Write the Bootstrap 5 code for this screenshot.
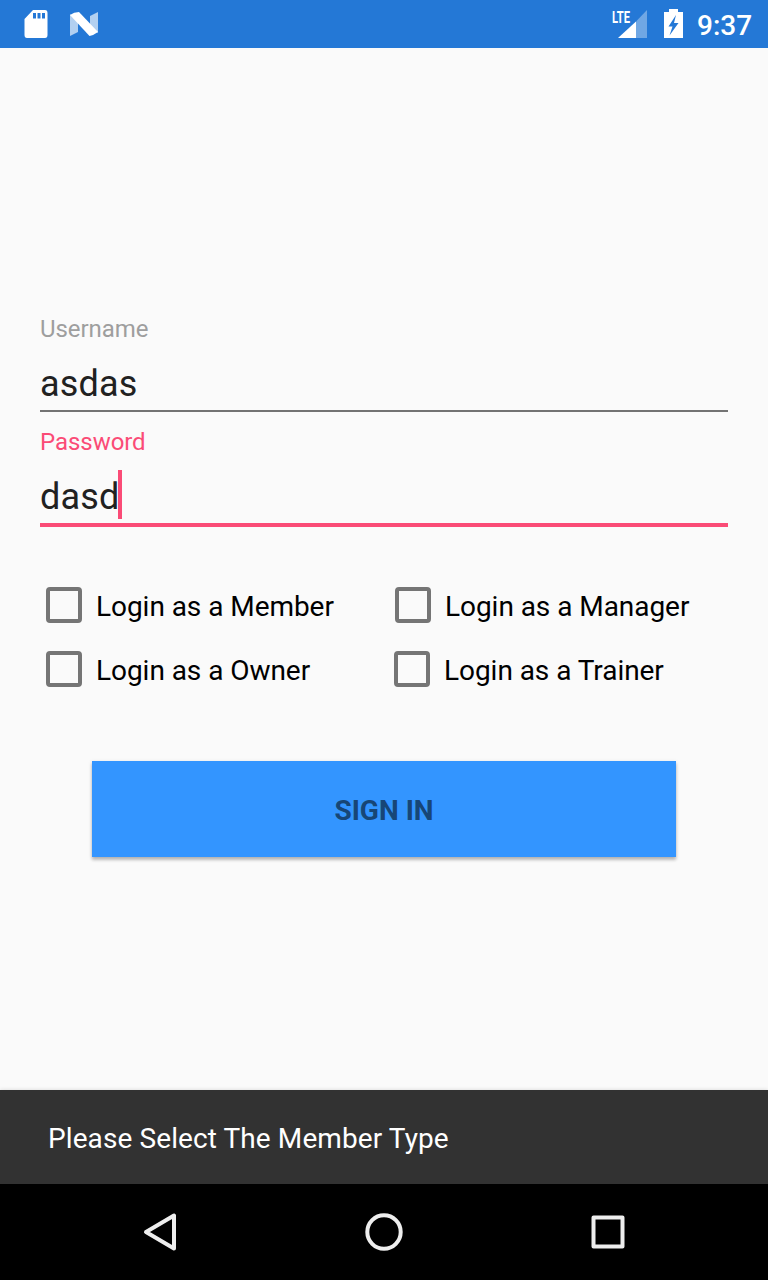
<!DOCTYPE html>
<html lang="en">
<head>
<meta charset="utf-8">
<meta name="viewport" content="width=device-width, initial-scale=1">
<title>Sign in</title>
<link href="https://cdn.jsdelivr.net/npm/bootstrap@5.3.0/dist/css/bootstrap.min.css" rel="stylesheet">
<style>
body{font-family:Roboto,sans-serif;background:#fafafa;height:1280px;overflow:hidden;color:#000}
.status-bar{height:48px;background:#2478d6;padding:0 16px 0 24px}
.n-icon{margin-left:22px}
.battery{margin:0 14px 0 16px}
.clock{font-size:28px;line-height:48px;font-weight:500;padding-top:2px;height:48px;width:55px;white-space:nowrap}
.lte{font:700 16.5px/1 Roboto,sans-serif}
.login{padding:267px 40px 0}
.field{margin-bottom:16px}
.field-label{font-size:24px;line-height:28px;color:#9e9e9e;margin-bottom:17px;letter-spacing:-.05px}
.field-value{font-size:36px;line-height:48px;height:52px;color:#212121;border-bottom:2px solid #737373;letter-spacing:.15px}
.field.active .field-label{color:#fa4b76}
.field.active .field-value{height:54px;border-bottom:4px solid #fa4b76}
.caret{top:-3px;left:100%;margin-left:-1px;width:4px;height:49px;background:#fa4b76}
.roles{margin-top:46px}
.role{height:64px;font-size:28px;line-height:64px;padding-left:6px;letter-spacing:-.05px}
.role .form-check-input{width:36px;height:36px;margin:0 14px 0 0;border:4px solid #757575;border-radius:4px;background:transparent}
.role span{padding-top:3px;height:64px;line-height:61px;white-space:nowrap}
.role-col{width:349px}
.role-col-b{width:348px}
.sign-in{display:block;width:584px;height:96px;margin:60px auto 0;padding:3px 0 0;border:0;border-radius:0;background:#3395ff;color:#174676;font-size:28px;font-weight:700;line-height:93px;box-shadow:0 3px 3px rgba(0,0,0,.22),0 1px 4px rgba(0,0,0,.13)}
.sign-in:hover{background:#3395ff;color:#174676}
.snack{height:94px;padding:4px 48px 0;background:#323232;color:#fff;font-size:28px;letter-spacing:.1px;box-shadow:0 0 4px rgba(0,0,0,.15)}
.nav-keys{height:96px;background:#000}
</style>
</head>
<body class="d-flex flex-column">
<header class="status-bar d-flex align-items-center flex-shrink-0 text-white">
  <svg width="24" height="48" viewBox="24 0 24 48"><path fill="#fff" fill-rule="evenodd" d="M33 10H45Q47.500 10 47.500 13V35Q47.500 38 45 38H27Q24.500 38 24.500 35V19ZM33 13V18.500H36V13ZM37.500 13V18.500H40.500V13ZM42 13V18.500H45V13Z"/></svg>
  <svg class="n-icon me-auto" width="28" height="48" viewBox="70 0 28 48"><path fill="#fff" fill-opacity=".65" d="M70 14V36L78 32V22ZM98 12L90 16V26L98 33Z"/><path fill="#fff" d="M70 15Q74 12 79 12L98 32Q94 35 89.500 36Z"/></svg>
  <svg width="36" height="48" viewBox="612 0 36 48"><path fill="#fff" fill-opacity=".35" d="M647 10V38H636V21.500Z"/><path fill="#fff" d="M618 38L636 21.500V38Z"/><text class="lte" x="612" y="22.500" textLength="18" lengthAdjust="spacingAndGlyphs" fill="#fff">LTE</text></svg>
  <svg class="battery" width="19" height="48" viewBox="664 0 19 48"><path fill="#fff" fill-rule="evenodd" d="M669 9H678V12H683V38H664V12H669ZM676 15L668.500 26.500H672.500L669.500 35.500L678.500 23H674Z"/></svg>
  <span class="clock">9:37</span>
</header>

<main class="login flex-grow-1">
  <div class="field">
    <div class="field-label">Username</div>
    <div class="field-value">asdas</div>
  </div>
  <div class="field active">
    <div class="field-label">Password</div>
    <div class="field-value"><span class="position-relative d-inline-block">dasd<i class="caret position-absolute"></i></span></div>
  </div>
  <div class="roles">
    <div class="d-flex">
      <label class="role role-col d-flex align-items-center flex-shrink-0"><input class="form-check-input" type="checkbox"><span>Login as a Member</span></label>
      <label class="role d-flex align-items-center"><input class="form-check-input" type="checkbox"><span>Login as a Manager</span></label>
    </div>
    <div class="d-flex">
      <label class="role role-col-b d-flex align-items-center flex-shrink-0"><input class="form-check-input" type="checkbox"><span>Login as a Owner</span></label>
      <label class="role d-flex align-items-center"><input class="form-check-input" type="checkbox"><span>Login as a Trainer</span></label>
    </div>
  </div>
  <button class="btn sign-in" type="button">SIGN IN</button>
</main>

<div class="snack d-flex align-items-center flex-shrink-0" role="status">Please Select The Member Type</div>
<footer class="nav-keys flex-shrink-0">
  <svg class="d-block" width="768" height="96" viewBox="0 1184 768 96" fill="none" stroke="#eee" stroke-width="4" stroke-linejoin="round"><path d="M174 1215.500V1248.500L146 1232Z"/><circle cx="384" cy="1232" r="16.700"/><rect x="593.500" y="1217.500" width="29" height="29"/></svg>
</footer>
<script src="https://cdn.jsdelivr.net/npm/bootstrap@5.3.0/dist/js/bootstrap.bundle.min.js"></script>
</body>
</html>
